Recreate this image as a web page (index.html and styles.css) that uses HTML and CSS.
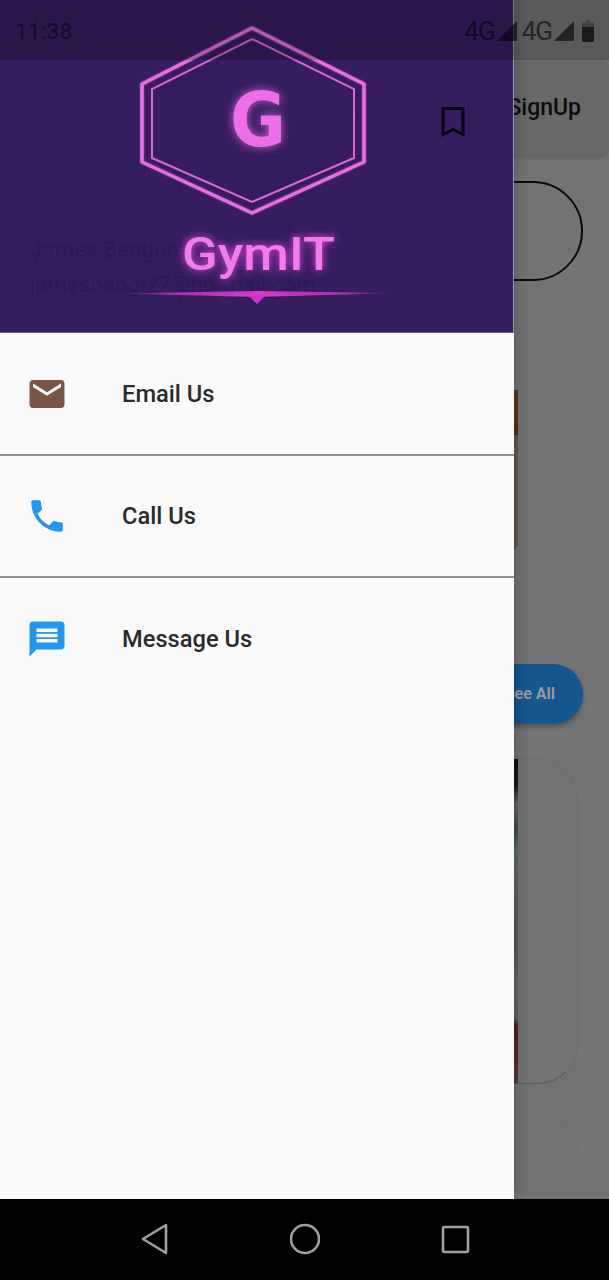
FILE: index.html
```html
<!DOCTYPE html>
<html lang="en">
<head>
<meta charset="utf-8">
<title>GymIT</title>
<link rel="stylesheet" href="styles.css">
</head>
<body>
<div class="phone">
  <div class="screen">
    <div class="under">
      <header class="appbar"><span class="signup">SignUp</span></header>
      <main class="page">
        <div class="search"></div>
        <div class="photo"></div>
        <button class="see-all">See All</button>
        <div class="card card-tall"><div class="card-photo"></div></div>
        <div class="card card-next"></div>
      </main>
    </div>

    <aside class="drawer">
      <div class="drawer-head">
        <div class="account">
          <div class="account-name">James Bangura</div>
          <div class="account-mail">jamesbangi27@hotmail.com</div>
        </div>
        <svg class="logo" viewBox="0 0 514 333" width="514" height="333">
          <defs>
            <linearGradient id="rule" x1="0" x2="1" y1="0" y2="0">
              <stop offset="0" stop-color="#c52fc0" stop-opacity="0"/>
              <stop offset=".18" stop-color="#c52fc0" stop-opacity=".8"/>
              <stop offset=".5" stop-color="#d03acb"/>
              <stop offset=".82" stop-color="#c52fc0" stop-opacity=".8"/>
              <stop offset="1" stop-color="#c52fc0" stop-opacity="0"/>
            </linearGradient>
          </defs>
          <polygon class="hex-outer" points="252,28 364,84 364,162 252,213 142,162 142,84"/>
          <polygon class="hex-inner" points="252,39 354,89 354,158 252,202 152,158 152,89"/>
          <text class="logo-g" x="230" y="146" textLength="56" lengthAdjust="spacingAndGlyphs">G</text>
          <text class="logo-word" x="182" y="270" textLength="153" lengthAdjust="spacingAndGlyphs">GymIT</text>
          <polygon class="logo-rule" fill="url(#rule)" points="118,293.5 257,291 397,293 257,297"/>
          <polygon class="logo-tip" points="248,295 266,295 257,304"/>
        </svg>
        <svg class="bookmark" viewBox="0 0 26 31" width="26" height="31">
          <path d="M3 2.5h20v26l-10-5-10 5z"/>
        </svg>
      </div>
      <ul class="menu">
        <li class="menu-row">
          <svg class="menu-icon icon-brown" viewBox="0 0 24 24"><path d="M20 4H4c-1.1 0-1.99.9-1.99 2L2 18c0 1.1.9 2 2 2h16c1.1 0 2-.9 2-2V6c0-1.1-.9-2-2-2zm0 4l-8 5-8-5V6l8 5 8-5v2z"/></svg>
          <span>Email Us</span>
        </li>
        <li class="menu-row">
          <svg class="menu-icon icon-blue" viewBox="0 0 24 24"><path d="M6.62 10.79c1.44 2.83 3.76 5.14 6.59 6.59l2.2-2.2c.27-.27.67-.36 1.02-.24 1.12.37 2.33.57 3.57.57.55 0 1 .45 1 1V20c0 .55-.45 1-1 1-9.39 0-17-7.61-17-17 0-.55.45-1 1-1h3.5c.55 0 1 .45 1 1 0 1.25.2 2.45.57 3.57.11.35.03.74-.25 1.02l-2.2 2.2z"/></svg>
          <span>Call Us</span>
        </li>
        <li class="menu-row menu-row-last">
          <svg class="menu-icon icon-blue" viewBox="0 0 24 24"><path d="M20 2H4c-1.1 0-1.99.9-1.99 2L2 22l4-4h14c1.1 0 2-.9 2-2V4c0-1.1-.9-2-2-2zm-2 12H6v-2h12v2zm0-3H6V9h12v2zm0-3H6V6h12v2z"/></svg>
          <span>Message Us</span>
        </li>
      </ul>
    </aside>

    <div class="statusbar">
      <span class="clock">11:38</span>
      <div class="status-right">
        <span class="net">4G</span>
        <svg class="signal" viewBox="0 0 20 20" width="20" height="20"><polygon points="20,0 20,20 0,20"/></svg>
        <span class="net net-second">4G</span>
        <svg class="signal" viewBox="0 0 20 20" width="20" height="20"><polygon points="20,0 20,20 0,20"/></svg>
        <svg class="battery" viewBox="0 0 12 22" width="12" height="22">
          <path class="battery-shell" d="M4 0h4v2h3a1 1 0 0 1 1 1v18a1 1 0 0 1-1 1H1a1 1 0 0 1-1-1V3a1 1 0 0 1 1-1h3z"/>
          <path d="M0 7h12v14a1 1 0 0 1-1 1H1a1 1 0 0 1-1-1z"/>
        </svg>
      </div>
    </div>
  </div>

  <nav class="navbar">
    <svg class="nav-icon" viewBox="0 0 30 34" width="30" height="34"><polygon points="26,3 26,31 3,17"/></svg>
    <svg class="nav-icon" viewBox="0 0 30 34" width="30" height="34"><circle cx="15" cy="17" r="14"/></svg>
    <svg class="nav-icon" viewBox="0 0 30 34" width="30" height="34"><rect x="3" y="5" width="25" height="25" rx="1.5"/></svg>
  </nav>
</div>
</body>
</html>
```
FILE: styles.css
```css
* { box-sizing: border-box; }
html, body { margin: 0; padding: 0; }
body { background: #000; font-family: Roboto, "Liberation Sans", sans-serif; }

.phone { width: 609px; height: 1280px; display: flex; flex-direction: column; overflow: hidden; }
.screen { position: relative; height: 1199px; overflow: hidden; background: #737373; }

/* Page dimmed behind the drawer */
.under { padding-top: 60px; height: 100%; }
.appbar {
  height: 95px; display: flex; align-items: center; justify-content: flex-end;
  padding: 0 28px 0 0; background: #686868; border-radius: 0 8px 8px 0;
  box-shadow: 0 2px 5px rgba(0, 0, 0, .18);
}
.signup { font-size: 23px; font-weight: 500; color: #0c0c0c; }
.page { display: flex; flex-direction: column; align-items: flex-end; }
.search {
  width: 300px; height: 100px; margin: 26px 26px 0 0;
  border: 2px solid #0a0a0a; border-radius: 50px;
}
.photo {
  width: 100px; height: 160px; margin: 109px 91px 0 0;
  background: linear-gradient(#5c391c 0, #4f3218 28%, #6a5446 28.5%, #6a5446 100%);
  border-radius: 0 0 6px 0;
}
.see-all {
  width: 160px; height: 60px; margin: 114px 26px 0 0; padding: 0 28px 2px 0;
  border: 0; border-radius: 30px; background: #15568f; color: #9a9a9a;
  font: 700 16px Roboto, sans-serif; text-align: right;
  box-shadow: 0 3px 5px rgba(0, 0, 0, .3);
}
.card { width: 300px; margin-right: 31px; border: 1px solid #6a6a6a; border-radius: 40px; }
.card-tall { height: 326px; margin-top: 34px; padding: 0 0 0 236px; border-color: #6c6c6c; border-bottom-color: #5c5c5c; overflow: hidden; }
.card-photo {
  width: 4px; height: 100%; margin-left: -1px;
  background: linear-gradient(#0d0d0d 0, #1a1a1a 8%, #5c6663 14%, #3f4a48 22%, #5e6c69 28%, #626262 40%, #555 55%, #666 70%, #5f5f5f 80%, #4a2422 82%, #573532 100%);
}
.card-next { height: 80px; margin-top: 31px; border-color: #6f6f6f; border-bottom: 0; border-radius: 40px 40px 0 0; }

/* Drawer */
.drawer {
  position: absolute; left: 0; top: 0; width: 514px; height: 1199px;
  display: flex; flex-direction: column; background: #fafafa;
  box-shadow: 0 0 14px rgba(0, 0, 0, .28);
}
.drawer-head {
  position: relative; height: 333px; padding: 232px 0 0 30px; flex: none;
  background-color: #361d5e;
  background-image:
    linear-gradient(rgba(0, 0, 0, .08) 1px, transparent 1px),
    linear-gradient(90deg, rgba(0, 0, 0, .08) 1px, transparent 1px);
  background-size: 36px 37px;
  background-position: 0 8px;
  border-right: 1px solid #a595b8;
  border-bottom: 1px solid #6a5a86;
}
.account { color: rgba(0, 0, 0, .13); font-size: 22px; line-height: 35px; letter-spacing: .2px; }
.logo { position: absolute; left: 0; top: 0; display: block; }
.hex-outer { fill: none; stroke: #e86fe3; stroke-width: 3.5; stroke-linejoin: round; filter: drop-shadow(0 0 1px rgba(232, 111, 227, .6)); }
.hex-inner { fill: none; stroke: #dc68d8; stroke-width: 2; }
.logo-g {
  font-family: "DejaVu Sans", sans-serif; font-weight: 700; font-size: 75px; fill: #ee6eea;
  filter: drop-shadow(0 0 5px rgba(238, 110, 234, .8));
}
.logo-word {
  font-family: Roboto, sans-serif; font-weight: 500; font-size: 46px; fill: #f07cec;
  filter: drop-shadow(0 0 4px rgba(240, 70, 234, 1));
}
.logo-tip { fill: #d62fd0; }
.bookmark { position: absolute; left: 440px; top: 106px; display: block; }
.bookmark path { fill: none; stroke: #05030a; stroke-width: 3; }

.menu { list-style: none; margin: 0; padding: 1px 0 0; }
.menu-row {
  height: 122px; display: flex; align-items: center; gap: 54px; padding: 0 0 0 26px;
  border-bottom: 2px solid #8e8e8e; font-size: 23.7px; font-weight: 500; color: #2a2a2a;
}
.menu-row-last { border-bottom: 0; }
.menu-icon { width: 42px; height: 42px; flex: none; }
.icon-brown { fill: #795548; }
.icon-blue { fill: #2196f3; }

/* Status bar sits over both drawer and page */
.statusbar {
  position: absolute; left: 0; top: 0; width: 100%; height: 60px;
  display: flex; align-items: center; justify-content: space-between;
  padding: 2px 15px 0 15px; background: rgba(0, 0, 0, .22);
}
.clock { font-size: 22px; color: rgba(0, 0, 0, .55); letter-spacing: .6px; }
.status-right { display: flex; align-items: center; gap: 2px; }
.net { font-size: 26px; letter-spacing: -1px; color: rgba(0, 0, 0, .6); }
.net-second { margin-left: 3px; }
.signal { display: block; fill: rgba(0, 0, 0, .6); }
.battery { display: block; margin-left: 6px; fill: rgba(0, 0, 0, .6); }
.battery-shell { fill: rgba(0, 0, 0, .25); }

/* Android nav */
.navbar { flex: none; height: 81px; display: flex; align-items: center; justify-content: center; gap: 120px; background: #000; padding-bottom: 1px; }
.nav-icon { display: block; fill: none; stroke: #a0a0a0; stroke-width: 2.6; stroke-linejoin: round; }
```
